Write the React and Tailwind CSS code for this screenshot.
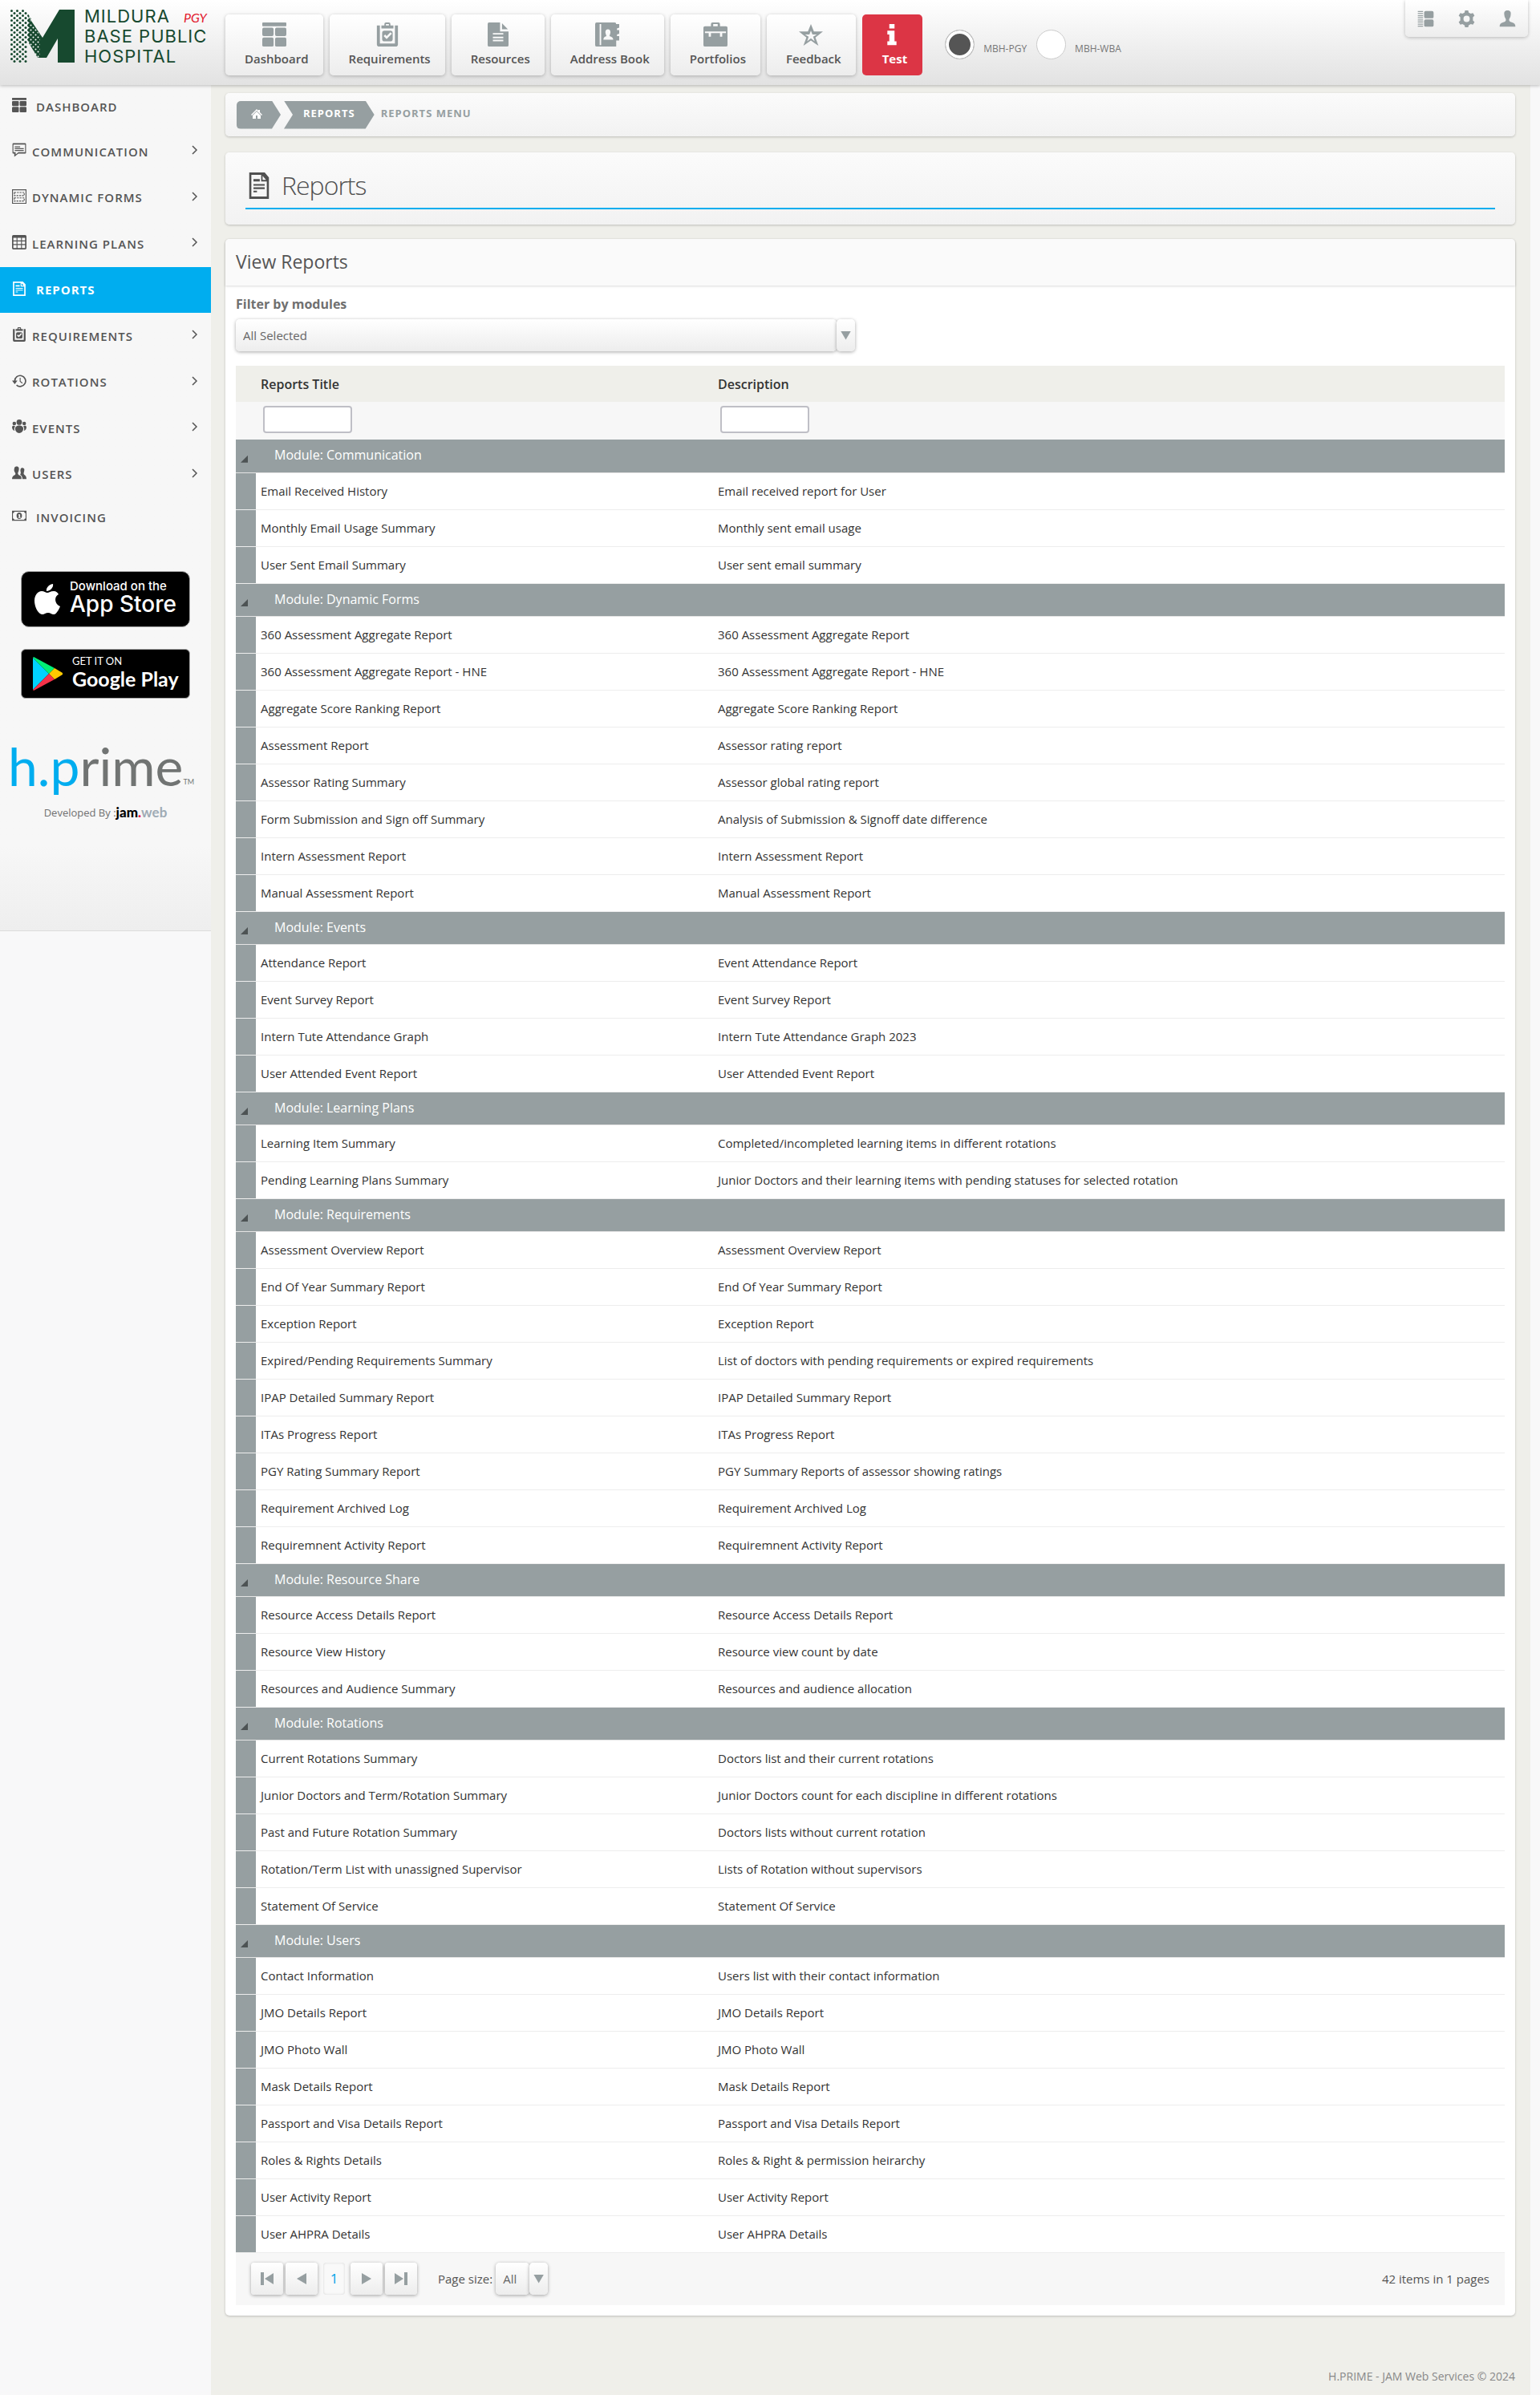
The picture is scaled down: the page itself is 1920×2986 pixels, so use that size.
import React from "react";

const GROUPS = [
  ["Communication", [["Email Received History", "Email received report for User"], ["Monthly Email Usage Summary", "Monthly sent email usage"], ["User Sent Email Summary", "User sent email summary"]]],
  ["Dynamic Forms", [["360 Assessment Aggregate Report"], ["360 Assessment Aggregate Report - HNE"], ["Aggregate Score Ranking Report"], ["Assessment Report", "Assessor rating report"], ["Assessor Rating Summary", "Assessor global rating report"], ["Form Submission and Sign off Summary", "Analysis of Submission & Signoff date difference"], ["Intern Assessment Report"], ["Manual Assessment Report"]]],
  ["Events", [["Attendance Report", "Event Attendance Report"], ["Event Survey Report"], ["Intern Tute Attendance Graph", "Intern Tute Attendance Graph 2023"], ["User Attended Event Report"]]],
  ["Learning Plans", [["Learning Item Summary", "Completed/incompleted learning items in different rotations"], ["Pending Learning Plans Summary", "Junior Doctors and their learning items with pending statuses for selected rotation"]]],
  ["Requirements", [["Assessment Overview Report"], ["End Of Year Summary Report"], ["Exception Report"], ["Expired/Pending Requirements Summary", "List of doctors with pending requirements or expired requirements"], ["IPAP Detailed Summary Report"], ["ITAs Progress Report"], ["PGY Rating Summary Report", "PGY Summary Reports of assessor showing ratings"], ["Requirement Archived Log"], ["Requiremnent Activity Report"]]],
  ["Resource Share", [["Resource Access Details Report"], ["Resource View History", "Resource view count by date"], ["Resources and Audience Summary", "Resources and audience allocation"]]],
  ["Rotations", [["Current Rotations Summary", "Doctors list and their current rotations"], ["Junior Doctors and Term/Rotation Summary", "Junior Doctors count for each discipline in different rotations"], ["Past and Future Rotation Summary", "Doctors lists without current rotation"], ["Rotation/Term List with unassigned Supervisor", "Lists of Rotation without supervisors"], ["Statement Of Service"]]],
  ["Users", [["Contact Information", "Users list with their contact information"], ["JMO Details Report"], ["JMO Photo Wall"], ["Mask Details Report"], ["Passport and Visa Details Report"], ["Roles & Rights Details", "Roles & Right & permission heirarchy"], ["User Activity Report"], ["User AHPRA Details"]]],
];

const ICONS = {
  dashboard: <><rect x="0" y="0" width="32" height="5" rx="1" /><rect x="0" y="7" width="15" height="11" rx="2" /><rect x="17" y="7" width="15" height="11" rx="2" /><rect x="0" y="20" width="15" height="12" rx="2" /><rect x="17" y="20" width="15" height="12" rx="2" /></>,
  clipboard: <><path d="M2 4h4v24h20V4h4v25a3 3 0 0 1-3 3H5a3 3 0 0 1-3-3z" /><path fillRule="evenodd" d="M8 4h4V2a2 2 0 0 1 2-2h4a2 2 0 0 1 2 2v2h4v4H8zM14 2v2h4V2z" /><path fillRule="evenodd" d="M12 11h8a3 3 0 0 1 3 3v8a3 3 0 0 1-3 3h-8a3 3 0 0 1-3-3v-8a3 3 0 0 1 3-3zm-1 7 4 4 7-7-2-2-5 5-2-2z" /></>,
  doc: <><path fillRule="evenodd" d="M2 0h17v12h13v18a2 2 0 0 1-2 2H2a2 2 0 0 1-2-2V2a2 2 0 0 1 2-2zM8 14v2h16v-2zm0 5v2h16v-2zm0 4v2h16v-2z" /><path d="M22 1l9 8h-9z" /></>,
  address: <><path fillRule="evenodd" d="M2 0h24a2 2 0 0 1 2 2h4v5l-3 1v2h3v5l-3 1v2h3v6h-4v8H2a2 2 0 0 1-2-2V2a2 2 0 0 1 2-2zM6 2v28h2V2zM17 9c-3 0-4 3-3 6l1 3c-3 1-4 2-4 5h13c0-3-2-4-5-5l1-3c1-3 0-6-3-6z" /></>,
  portfolio: <><path fillRule="evenodd" d="M10 5V2a2 2 0 0 1 2-2h8a2 2 0 0 1 2 2v3h8a2 2 0 0 1 2 2v23a2 2 0 0 1-2 2H2a2 2 0 0 1-2-2V7a2 2 0 0 1 2-2zm3 0h6V2h-6zM2 12v2h5v5h3v-5h12v5h3v-5h5v-2z" /></>,
  star: <path fillRule="evenodd" d="M16 2l4 10h12l-10 8 4 11-10-7-10 7 4-11-10-8h12zm0 9-2 5H8l5 3-2 6 5-4 5 4-2-6 5-3h-6z" />,
  info: <path d="M12 2h8v6h-8zM9 11h11v14h3v5H9v-5h3v-9H9z" />,
  chat: <><path fillRule="evenodd" d="M3 1h26a2 2 0 0 1 2 2v19a2 2 0 0 1-2 2H14l-9 7v-7H3a2 2 0 0 1-2-2V3a2 2 0 0 1 2-2zm0 3v17h5v5l6-5h15V4z" /><path d="M6 8h12v2H6zM6 12h20v2H6zM6 16h20v2H6z" /></>,
  forms: <><path fillRule="evenodd" d="M0 0h32v32H0zm2 2v28h28V2z" /><path fill="none" stroke="currentColor" strokeWidth="2" strokeDasharray="4 2" d="M5 7h22v7H5zM5 19h22v7H5z" /></>,
  grid: <path fillRule="evenodd" d="M3 0h26a3 3 0 0 1 3 3v26a3 3 0 0 1-3 3H3a3 3 0 0 1-3-3V3a3 3 0 0 1 3-3zM3 6v6h7V6zm9 0v6h8V6zm10 0v6h7V6zM3 14v6h7v-6zm9 0v6h8v-6zm10 0v6h7v-6zM3 22v7h7v-7zm9 0v7h8v-7zm10 0v7h7v-7z" />,
  report: <><path fillRule="evenodd" d="M2 0h22l6 6v26H2zm3 3v26h22V11h-8V3zm16 1v5h5z" /><path d="M8 8h9v3H8zM8 14h16v2H8zM8 18h16v2H8zM8 22h5v2H8z" /></>,
  history: <><path fill="none" stroke="currentColor" strokeWidth="3" d="M6 16a12 12 0 1 1 4 9" /><path d="M0 15h12l-6 8z" /><path fill="none" stroke="currentColor" strokeWidth="2" d="M18 9v8l5 4" /></>,
  events: <><circle cx="16" cy="6" r="6" /><circle cx="5" cy="9" r="4" /><circle cx="27" cy="9" r="4" /><path d="M7 20c0-9 18-9 18 0 0 6-4 10-9 10S7 26 7 20zM0 17c0-4 5-4 7-2-2 3-3 7-1 10-4-1-6-4-6-8zM32 17c0-4-5-4-7-2 2 3 3 7 1 10 4-1 6-4 6-8z" /></>,
  users: <><path d="M10 1c5 0 6 4 5 8 0 3-2 5-2 7s1 4 4 5c3 1 4 4 4 8H0c0-5 2-7 6-9 2-1 2-3 1-5-2-3-3-6-2-9 0-3 2-5 5-5zM23 4c4 0 5 4 4 7-1 4-2 6 0 8 3 2 5 4 5 10h-9c0-6-2-8-5-10 1-2 2-3 1-6-1-5 0-9 4-9z" /></>,
  money: <><path fillRule="evenodd" d="M0 5h32v22H0zm2 5v12c2 0 3 1 3 3h22c0-2 1-3 3-3V10c-2 0-3-1-3-3H5c0 2-1 3-3 3z" /><path fillRule="evenodd" d="M16 9c4 0 6 3 6 7s-2 7-6 7-6-3-6-7 2-7 6-7zm-2 4v2h1v4h-1v2h5v-2h-1v-6z" /></>,
  panel: <><rect x="13" y="1" width="18" height="14" rx="3" /><rect x="13" y="17" width="18" height="14" rx="3" /><path d="M1 1h10v2H1zM1 5h10v2H1zM1 9h10v2H1zM1 13h10v2H1zM1 17h10v2H1zM1 21h10v2H1zM1 25h10v2H1zM1 29h10v2H1z" /></>,
  cog: <path fillRule="evenodd" d="M13 0h6l1 4 4 2 4-1 3 5-3 3v6l3 3-3 5-4-1-4 2-1 4h-6l-1-4-4-2-4 1-3-5 3-3v-6l-3-3 3-5 4 1 4-2zm3 10a6 6 0 1 0 0 12 6 6 0 0 0 0-12z" />,
  person: <path d="M16 0c6 0 7 4 6 9 0 4-3 6-3 9s3 4 6 5c4 1 6 3 6 8H1c0-5 2-7 6-8 3-1 6-2 6-5s-3-5-3-9c-1-5 0-9 6-9z" />,
};

function Icon({ name, className }) {
  return <svg viewBox="0 0 32 32" preserveAspectRatio="none" fill="currentColor" aria-hidden="true" className={className}>{ICONS[name]}</svg>;
}

const NAV = [["Dashboard", "dashboard", "w-[30px]"], ["Requirements", "clipboard", "w-[30px]"], ["Resources", "doc", "w-[26px]"], ["Address Book", "address", "w-[30px]"], ["Portfolios", "portfolio", "w-[30px]"], ["Feedback", "star", "w-[30px]"]];
const SIDE = [["Dashboard", "dashboard", false], ["Communication", "chat", true], ["Dynamic Forms", "forms", true], ["Learning Plans", "grid", true], ["Reports", "report", false], ["Requirements", "clipboard", true], ["Rotations", "history", true], ["Events", "events", true], ["Users", "users", true], ["Invoicing", "money", false]];

const RAISED = "bg-linear-to-b from-white to-[#ededed] shadow-[0_1px_4px_rgba(0,0,0,0.35)]";

function Logo() {
  return (
    <a href="#home" className="flex w-[265px] shrink-0 gap-3 pl-[13px] pt-3 text-[#17492f]">
      <svg viewBox="0 0 80 66" className="h-[66px] w-20 shrink-0" aria-hidden="true">
        <defs>
          <pattern id="dots" width="7" height="6" patternUnits="userSpaceOnUse"><circle cx="1.5" cy="1.5" r="1.5" fill="#17492f" /><circle cx="5" cy="4.5" r="1.5" fill="#17492f" /></pattern>
          <pattern id="holes" width="6" height="6" patternUnits="userSpaceOnUse"><circle cx="1.5" cy="1.5" r="1" fill="#fff" /><circle cx="4.5" cy="4.5" r="1" fill="#fff" /></pattern>
        </defs>
        <path fill="url(#dots)" d="M0 0h19l7 12v32l-5-6v28H0z" />
        <path fill="#17492f" d="M61 0h19v66H59V36L45 60H34L22 40V8l18 27z" />
        <path fill="url(#holes)" d="M21 7l16 25v28h-3L21 40z" />
      </svg>
      <span className="relative -mt-1 block font-['Inter'] text-[22px] leading-[25px] tracking-[1px] whitespace-nowrap">
        MILDURA<br />BASE PUBLIC<br />HOSPITAL
        <span className="absolute top-0.5 left-[124px] font-['Lato'] text-base leading-[24px] tracking-normal italic text-[#e3202f]">PGY</span>
      </span>
    </a>
  );
}

function Badges() {
  return (
    <div className="mx-[26px] mt-[42px] flex flex-col gap-[27px] text-white">
      <a href="#appstore" className="flex h-[70px] items-center rounded-[10px] border border-[#a6a6a6] bg-black pl-4">
        <svg viewBox="0 0 32 39" className="h-[39px] w-8" fill="currentColor" aria-hidden="true"><path d="M23 0c1 4-3 9-8 9-1-4 4-9 8-9zM16 11c2 0 4-2 8-2 3 0 5 2 6 4-6 3-5 12 2 15-2 5-5 10-8 10s-4-2-7-2-5 2-7 2C5 38 0 29 0 21 0 14 4 9 9 9c3 0 5 2 7 2z" /></svg>
        <span className="ml-3 block pb-1 font-['Inter']"><span className="block text-[15px] leading-4 font-medium">Download on the</span><span className="block text-[28px] leading-7 font-medium">App Store</span></span>
      </a>
      <a href="#googleplay" className="flex h-[62px] items-center rounded-md border border-[#a6a6a6] bg-black pl-3.5">
        <svg viewBox="0 0 37 42" className="h-[42px] w-[37px]" aria-hidden="true"><path fill="#00d2ff" d="M0 1l20 20L0 41z" /><path fill="#00f076" d="M1 0l26 14-7 7L0 1z" /><path fill="#ffc900" d="M27 14l10 6v2l-10 6-7-7z" /><path fill="#f43249" d="M0 41l20-20 7 7L1 42z" /></svg>
        <span className="ml-3 block pb-1 font-['Lato']"><span className="block text-[13px] leading-[15px]">GET IT ON</span><span className="block text-[25px] leading-[28px] font-bold">Google Play</span></span>
      </a>
    </div>
  );
}

function Sidebar() {
  return (
    <aside className="h-[1055px] w-[263px] shrink-0 border-b border-[#dcdcdc] bg-linear-to-b from-[#f7f7f7] from-90% to-[#eeeeee]">
      <nav>
        <ul>
          {SIDE.map(([label, icon, more]) => (
            <li key={label} className="h-[57px] first:h-[54px] even:h-[58px] last:h-[50px]!">
              <a href={"#" + icon} className={"flex h-full items-center pl-[15px] pr-4 text-[15px] tracking-[1px] uppercase " + (label === "Reports" ? "bg-[#00adef] font-bold text-white" : "font-semibold text-[#555]")}>
                <Icon name={icon} className="mb-1 size-[18px]" />
                <span className={"flex-1 " + (more ? "ml-[7px]" : "ml-3")}>{label}</span>
                {more && <svg viewBox="0 0 8 12" className="mb-1 h-3 w-2" fill="none" stroke="currentColor" strokeWidth="1.5" aria-hidden="true"><path d="M1 1l5 5-5 5" /></svg>}
              </a>
            </li>
          ))}
        </ul>
      </nav>
      <Badges />
      <a href="#hprime" className="mt-11 ml-2.5 flex items-end font-['Lato'] text-[66px] leading-[80px] text-[#717473]">
        <span><span className="text-[#00adef]">h.p</span>rime</span><span className="mb-3.5 text-[9px] leading-3">TM</span>
      </a>
      <p className="mt-2 flex items-center justify-center text-[13px] leading-5 text-[#707070]">Developed By :<a href="#jam" className="font-['Lato'] text-[17px] font-black text-black">jam<span className="text-[#e4003a]">.</span><span className="font-bold text-[#9fabb5]">web</span></a></p>
    </aside>
  );
}

function Switch({ label, on }) {
  return (
    <label className="flex items-center text-xs text-[#777]">
      <input type="radio" name="site" defaultChecked={on} className="mr-[11px] size-[37px] appearance-none rounded-full border border-[#ccc] bg-white checked:bg-[#555] checked:shadow-[inset_0_0_0_4px_#fff]" />
      <span className="pt-3">{label}</span>
    </label>
  );
}

function Header() {
  return (
    <header className="relative flex h-[106px] bg-linear-to-b from-white to-[#e2e2e2] shadow-[0_1px_4px_rgba(0,0,0,0.25)]">
      <Logo />
      <nav className="ml-4 flex h-[94px] gap-2 pt-[18px]">
        {NAV.map(([label, icon, width]) => (
          <a key={label} href={"#" + icon} className="flex flex-col items-center rounded-[5px] bg-linear-to-b from-white to-[#ededed] px-[18px] pt-2.5 text-[15px] leading-5 font-semibold text-[#555] shadow-[0_1px_4px_rgba(0,0,0,0.25)]">
            <Icon name={icon} className={"h-[30px] text-[#969fa1] " + width} />
            <span className="mt-[5px] pl-1.5">{label}</span>
          </a>
        ))}
        <a href="#test" className="flex flex-col items-center rounded-[5px] bg-[#dc3545] px-[19px] pt-2.5 text-[15px] leading-5 font-bold text-white">
          <Icon name="info" className="h-[30px] w-[26px]" />
          <span className="mt-[5px] pl-1.5">Test</span>
        </a>
      </nav>
      <div className="ml-7 flex h-[110px] items-center gap-3">
        <Switch label="MBH-PGY" on />
        <Switch label="MBH-WBA" />
      </div>
      <div className="mr-[15px] ml-auto flex h-[46px] w-[153px] items-center justify-around rounded-b-[5px] bg-linear-to-b from-white to-[#ededed] text-[#969fa1] shadow-[0_1px_4px_rgba(0,0,0,0.25)]">
        {["panel", "cog", "person"].map((n) => <button key={n} type="button" aria-label={n}><Icon name={n} className="size-[21px]" /></button>)}
      </div>
    </header>
  );
}

function Pager() {
  const btn = "flex h-10 w-10 items-center justify-center rounded text-[#969fa1] " + RAISED;
  return (
    <div className="flex h-[65px] items-center bg-[#f7f7f7] px-[19px] text-[15px] text-[#555]">
      <div className="flex gap-[3px]">
        <button type="button" aria-label="First page" className={btn}><svg viewBox="0 0 16 16" className="size-4" fill="currentColor"><path d="M0 0h4v16H0zM16 1v14L5 8z" /></svg></button>
        <button type="button" aria-label="Previous page" className={btn}><svg viewBox="0 0 12 14" className="h-3.5 w-3" fill="currentColor"><path d="M12 0v14L0 7z" /></svg></button>
        <button type="button" className="mx-1 h-10 w-[27px] rounded bg-[#f9f9f9] text-[17px] text-[#00a3e8] shadow-[inset_0_0_3px_rgba(0,0,0,0.15)]">1</button>
        <button type="button" aria-label="Next page" className={btn}><svg viewBox="0 0 12 14" className="h-3.5 w-3" fill="currentColor"><path d="M0 0v14l12-7z" /></svg></button>
        <button type="button" aria-label="Last page" className={btn}><svg viewBox="0 0 16 16" className="size-4" fill="currentColor"><path d="M12 0h4v16h-4zM0 1v14l11-7z" /></svg></button>
      </div>
      <label htmlFor="size" className="ml-[26px]">Page size:</label>
      <Combo id="size" value="All" className="ml-1 w-[65px]" />
      <span className="ml-auto">42 items in 1 pages</span>
    </div>
  );
}

function Combo({ id, value, className }) {
  return (
    <div className={"relative flex h-10 text-[15px] text-[#666] " + className}>
      <select id={id} className={"h-10 min-w-0 flex-1 appearance-none rounded-[5px] px-[9px] " + RAISED}><option>{value}</option></select>
      <span className={"pointer-events-none flex w-[23px] items-center justify-center rounded-[5px] " + RAISED}>
        <span className="h-[11px] w-[13px] bg-[#969fa1] [clip-path:polygon(0_0,100%_0,50%_100%)]" />
      </span>
    </div>
  );
}

function Reports() {
  return (
    <section className="mt-[18px] rounded-[5px] bg-white pb-[13px] shadow-[0_1px_3px_rgba(0,0,0,0.22)]">
      <h2 className="h-[58px] rounded-t-[5px] bg-[#fafafa] pl-[13px] text-[23px] leading-[56px] font-normal text-[#555] shadow-[0_1px_3px_rgba(0,0,0,0.15)]">View Reports</h2>
      <div className="px-[13px]">
        <label htmlFor="modules" className="block pt-[11px] pb-[7px] text-base leading-6 font-bold text-[#707070]">Filter by modules</label>
        <Combo id="modules" value="All Selected" className="w-[772px] max-w-full" />
        <table className="mt-[18px] w-full table-fixed border-collapse text-left text-[15px] text-[#333]">
          <colgroup><col className="w-[25px]" /><col className="w-[570px]" /><col /></colgroup>
          <thead>
            <tr className="h-[45px] bg-[#efefea] text-base"><th /><th className="pt-px pl-1.5 font-semibold">Reports Title</th><th className="pt-px pl-1.5 font-semibold">Description</th></tr>
            <tr className="h-[47px] bg-[#f7f7f7]">
              <td />
              {["Reports Title", "Description"].map((n) => <td key={n} className="pb-1 pl-[9px]"><input aria-label={n} className="block h-[34px] w-[111px] rounded border-2 border-[#bfbfc6] bg-white px-1" /></td>)}
            </tr>
          </thead>
          {GROUPS.map(([name, rows]) => (
            <tbody key={name}>
              <tr className="h-[41px] border-b border-[#e4e4e4] bg-[#969fa1] text-base text-white">
                <td><button type="button" aria-label="Collapse" className="mt-2 ml-1.5 block size-[9px] bg-[#4d5354] [clip-path:polygon(100%_0,100%_100%,0_100%)]" /></td>
                <th colSpan={2} className="pb-0.5 pl-[23px] font-medium">Module: {name}</th>
              </tr>
              {rows.map(([a, b]) => (
                <tr key={a} className="h-[46px] border-b border-[#ededed]"><td className="bg-[#969fa1]" /><td className="pl-1.5">{a}</td><td className="pl-1.5">{b || a}</td></tr>
              ))}
            </tbody>
          ))}
        </table>
        <Pager />
      </div>
    </section>
  );
}

export default function App() {
  const card = "rounded-[5px] bg-linear-to-b from-[#fbfbfb] to-[#f2f2f2] shadow-[0_1px_3px_rgba(0,0,0,0.22)]";
  return (
    <div className="bg-[#f8f8f9] font-['Open_Sans',sans-serif]">
      <Header />
      <div className="flex items-start">
        <Sidebar />
        <div className="mr-3 min-w-0 flex-1 bg-[#efefea] pt-2.5 pr-[19px] pl-[18px]">
          <nav aria-label="Breadcrumb" className={"flex h-[54px] items-center pl-3.5 text-[13px] font-bold tracking-[1px] text-[#969fa1] " + card}>
            <a href="#home" aria-label="Home" className="flex h-[35px] w-[55px] items-center rounded-l-[5px] bg-[#969fa1] pl-[18px] text-white [clip-path:polygon(0_0,80%_0,100%_50%,80%_100%,0_100%)]">
              <svg viewBox="0 0 14 12" className="mb-0.5 h-3 w-3.5" fill="currentColor"><path d="M7 0l2 2V1h2v3l3 3-1 1-6-6-6 6-1-1zM7 3l5 5v4H8V8H6v4H2V8z" /></svg>
            </a>
            <a href="#reports" className="ml-1 flex h-[35px] items-center bg-[#969fa1] px-6 pb-0.5 text-white [clip-path:polygon(0_0,calc(100%-11px)_0,100%_50%,calc(100%-11px)_100%,0_100%,11px_50%)]">REPORTS</a>
            <span className="ml-2 pb-0.5">REPORTS MENU</span>
          </nav>
          <div className={"mt-5 h-[90px] px-[25px] pt-[19px] " + card}>
            <h1 className="flex h-[52px] items-center border-b-2 border-[#00adef] pb-1.5 pl-[3px] text-[32px] font-light tracking-[-1px] text-[#505050]">
              <Icon name="report" className="mr-3.5 h-[33px] w-7" />Reports
            </h1>
          </div>
          <Reports />
          <footer className="flex h-[100px] items-end justify-end pb-3.5 text-sm leading-5 text-[#888]">H.PRIME - JAM Web Services © 2024</footer>
        </div>
      </div>
    </div>
  );
}
